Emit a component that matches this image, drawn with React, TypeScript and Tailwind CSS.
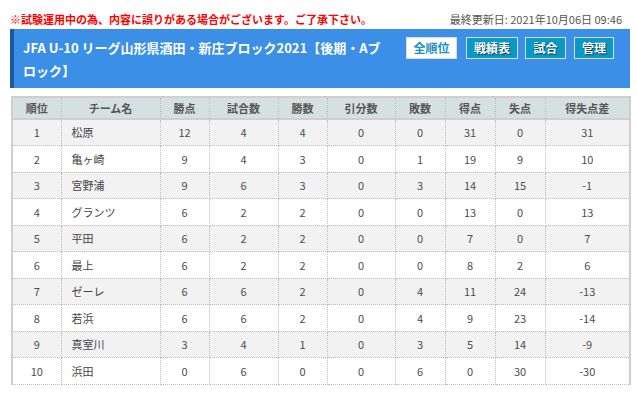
const rows = [
  { rank: 1, team: "松原", pts: 12, games: 4, win: 4, draw: 0, lose: 0, gf: 31, ga: 0, diff: 31 },
  { rank: 2, team: "亀ヶ崎", pts: 9, games: 4, win: 3, draw: 0, lose: 1, gf: 19, ga: 9, diff: 10 },
  { rank: 3, team: "宮野浦", pts: 9, games: 6, win: 3, draw: 0, lose: 3, gf: 14, ga: 15, diff: -1 },
  { rank: 4, team: "グランツ", pts: 6, games: 2, win: 2, draw: 0, lose: 0, gf: 13, ga: 0, diff: 13 },
  { rank: 5, team: "平田", pts: 6, games: 2, win: 2, draw: 0, lose: 0, gf: 7, ga: 0, diff: 7 },
  { rank: 6, team: "最上", pts: 6, games: 2, win: 2, draw: 0, lose: 0, gf: 8, ga: 2, diff: 6 },
  { rank: 7, team: "ゼーレ", pts: 6, games: 6, win: 2, draw: 0, lose: 4, gf: 11, ga: 24, diff: -13 },
  { rank: 8, team: "若浜", pts: 6, games: 6, win: 2, draw: 0, lose: 4, gf: 9, ga: 23, diff: -14 },
  { rank: 9, team: "真室川", pts: 3, games: 4, win: 1, draw: 0, lose: 3, gf: 5, ga: 14, diff: -9 },
  { rank: 10, team: "浜田", pts: 0, games: 6, win: 0, draw: 0, lose: 6, gf: 0, ga: 30, diff: -30 },
];

const heads = ["順位", "チーム名", "勝点", "試合数", "勝数", "引分数", "敗数", "得点", "失点", "得失点差"];
const widths = [49, 99, 49, 69, 49, 68, 50, 50, 50, 85];

function App() {
  const cell = "border-x border-b border-dotted border-[#bdbdbd] text-center";
  const btn = "border border-[#dcdcdc] bg-[#0a99c7] text-center text-white [text-shadow:1px_1px_1px_rgba(0,0,0,0.6)]";

  return (
    <div className="w-[637px] bg-white px-[10px] font-['Noto_Sans_CJK_JP','Noto_Sans',sans-serif]">
      {/* notice + last update */}
      <div className="flex items-center justify-between pt-[12px] pb-[2px] text-[11px] leading-[15px]">
        <p className="font-bold text-[#ff0000]">※試験運用中の為、内容に誤りがある場合がございます。ご了承下さい。</p>
        <p className="mr-[5px] text-[#555]">最終更新日: 2021年10月06日 09:46</p>
      </div>

      {/* title bar */}
      <div className="flex w-[620px] items-start justify-between border-l-4 border-[#1b5aa3] bg-[#3b8fe6] pt-[7px] pb-[6px] pl-[9px] pr-[16px]">
        <h1 className="w-[360px] text-[13px] leading-[23px] font-bold text-white">
          JFA U-10 リーグ山形県酒田・新庄ブロック2021【後期・Aブロック】
        </h1>
        <div className="mt-[1px] flex text-[12px] font-bold leading-[20px]">
          <a className="w-[51px] border border-[#dcdcdc] bg-white text-center text-[#1690c8]">全順位</a>
          <a className={`ml-[9px] w-[52px] ${btn}`}>戦績表</a>
          <a className={`ml-[7px] w-[41px] ${btn}`}>試合</a>
          <a className={`ml-[8px] w-[40px] ${btn}`}>管理</a>
        </div>
      </div>

      {/* standings */}
      <table className="mt-[8px] ml-[1px] w-[619px] table-fixed border-collapse border-x-2 border-t-2 border-[#cfcfcf] text-[11px] text-[#4d4d4d]">
        <colgroup>
          {widths.map((w, i) => (
            <col key={i} style={{ width: w }} />
          ))}
        </colgroup>
        <thead>
          <tr className="h-[22px] border-b-2 border-[#cfcfcf] bg-[#d5e0e0]">
            {heads.map((h) => (
              <th key={h} className="border-x border-dotted border-[#bdbdbd] text-center font-bold text-[#555]">
                {h}
              </th>
            ))}
          </tr>
        </thead>
        <tbody>
          {rows.map((r, i) => (
            <tr key={r.rank} className={`h-[26.5px] ${i % 2 === 0 ? "bg-[#f2f2f2]" : "bg-white"}`}>
              <td className={cell}>{r.rank}</td>
              <td className={`${cell} !text-left pl-[10px] text-[#444]`}>{r.team}</td>
              <td className={cell}>{r.pts}</td>
              <td className={cell}>{r.games}</td>
              <td className={cell}>{r.win}</td>
              <td className={cell}>{r.draw}</td>
              <td className={cell}>{r.lose}</td>
              <td className={cell}>{r.gf}</td>
              <td className={cell}>{r.ga}</td>
              <td className={cell}>{r.diff}</td>
            </tr>
          ))}
        </tbody>
      </table>
    </div>
  );
}

export default App;
